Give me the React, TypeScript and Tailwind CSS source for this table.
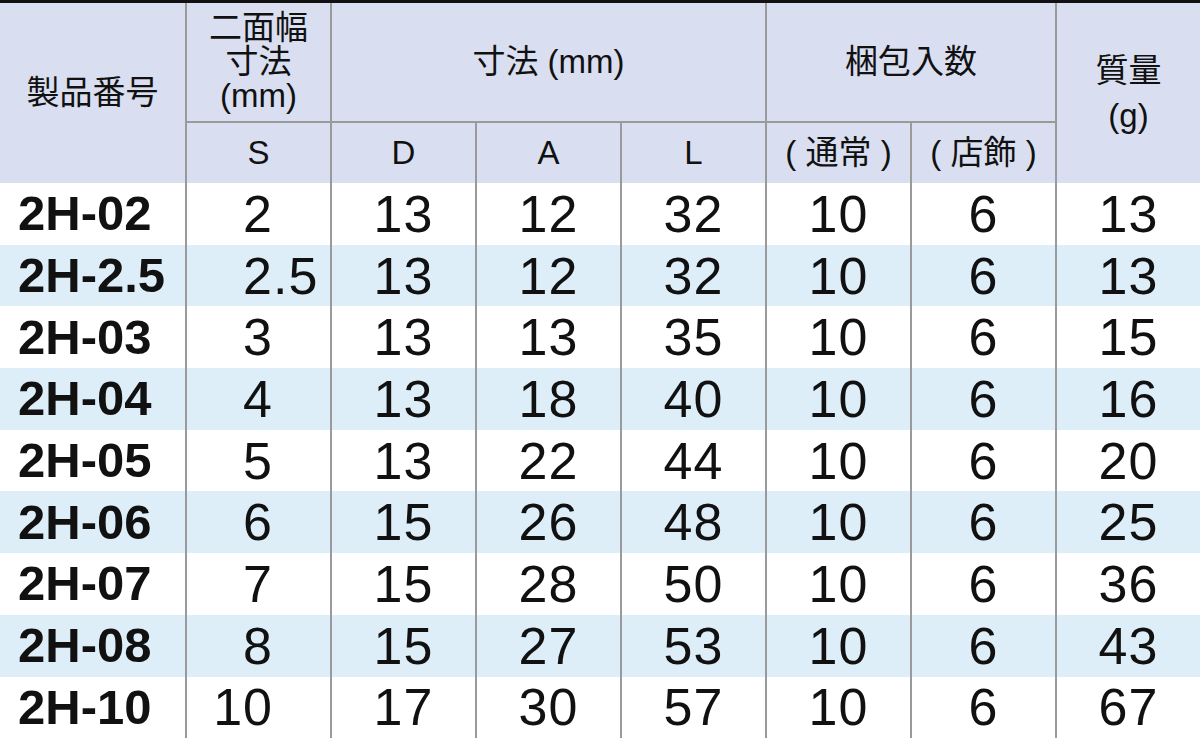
import React from "react";

type Row = {
  code: string;
  s: string;
  d: number;
  a: number;
  l: number;
  normal: number;
  store: number;
  mass: number;
};

const rows: Row[] = [
  { code: "2H-02", s: "2", d: 13, a: 12, l: 32, normal: 10, store: 6, mass: 13 },
  { code: "2H-2.5", s: "2.5", d: 13, a: 12, l: 32, normal: 10, store: 6, mass: 13 },
  { code: "2H-03", s: "3", d: 13, a: 13, l: 35, normal: 10, store: 6, mass: 15 },
  { code: "2H-04", s: "4", d: 13, a: 18, l: 40, normal: 10, store: 6, mass: 16 },
  { code: "2H-05", s: "5", d: 13, a: 22, l: 44, normal: 10, store: 6, mass: 20 },
  { code: "2H-06", s: "6", d: 15, a: 26, l: 48, normal: 10, store: 6, mass: 25 },
  { code: "2H-07", s: "7", d: 15, a: 28, l: 50, normal: 10, store: 6, mass: 36 },
  { code: "2H-08", s: "8", d: 15, a: 27, l: 53, normal: 10, store: 6, mass: 43 },
  { code: "2H-10", s: "10", d: 17, a: 30, l: 57, normal: 10, store: 6, mass: 67 },
];

const font = { fontFamily: '"Liberation Sans", Arial, "Noto Sans CJK JP", sans-serif' };

function HeaderCell({ className, children }: { className?: string; children: React.ReactNode }) {
  return (
    <div className={`flex flex-col items-center justify-center bg-[#d9dff0] text-center text-[33px] text-[#111] ${className ?? ""}`}>
      {children}
    </div>
  );
}

// S column lines up on the decimal point
function SizeCell({ value }: { value: string }) {
  const [whole, frac] = value.split(".");
  return (
    <div className="flex items-center">
      <span className="w-[86px] text-right">{whole}</span>
      {frac && <span>.{frac}</span>}
    </div>
  );
}

function DataRow({ row, striped }: { row: Row; striped: boolean }) {
  const bg = striped ? "bg-[#ddeef9]" : "bg-white";
  const cell = `flex items-center justify-center ${bg}`;

  return (
    <div className="grid h-[61.7px] shrink-0 grid-cols-[185px_repeat(7,1fr)] gap-x-[2px] bg-[#9a9a9a] text-[52px] leading-none tracking-[1px] text-[#111]">
      <div className={`flex items-center pl-[18px] text-[49px] font-bold tracking-[0px] ${bg}`}>{row.code}</div>
      <div className={`flex items-center ${bg}`}>
        <SizeCell value={row.s} />
      </div>
      <div className={cell}>{row.d}</div>
      <div className={cell}>{row.a}</div>
      <div className={cell}>{row.l}</div>
      <div className={cell}>{row.normal}</div>
      <div className={cell}>{row.store}</div>
      <div className={cell}>{row.mass}</div>
    </div>
  );
}

export default function App() {
  return (
    <div className="flex h-[738px] w-[1200px] flex-col overflow-hidden border-t-[3px] border-[#111] bg-white" style={font}>
      <div className="grid h-[180px] shrink-0 grid-cols-[185px_repeat(7,1fr)] grid-rows-[118px_60px] gap-[2px] bg-[#9a9a9a]">
        <HeaderCell className="row-span-2">製品番号</HeaderCell>
        <HeaderCell className="text-[32px] leading-[34px]">
          <span>二面幅</span>
          <span>寸法</span>
          <span>(mm)</span>
        </HeaderCell>
        <HeaderCell className="col-span-3">寸法 (mm)</HeaderCell>
        <HeaderCell className="col-span-2">梱包入数</HeaderCell>
        <HeaderCell className="row-span-2 leading-[45px]">
          <span>質量</span>
          <span>(g)</span>
        </HeaderCell>
        <HeaderCell>S</HeaderCell>
        <HeaderCell>D</HeaderCell>
        <HeaderCell>A</HeaderCell>
        <HeaderCell>L</HeaderCell>
        <HeaderCell>( 通常 )</HeaderCell>
        <HeaderCell>( 店飾 )</HeaderCell>
      </div>
      {rows.map((row, index) => (
        <DataRow key={row.code} row={row} striped={index % 2 === 1} />
      ))}
    </div>
  );
}
